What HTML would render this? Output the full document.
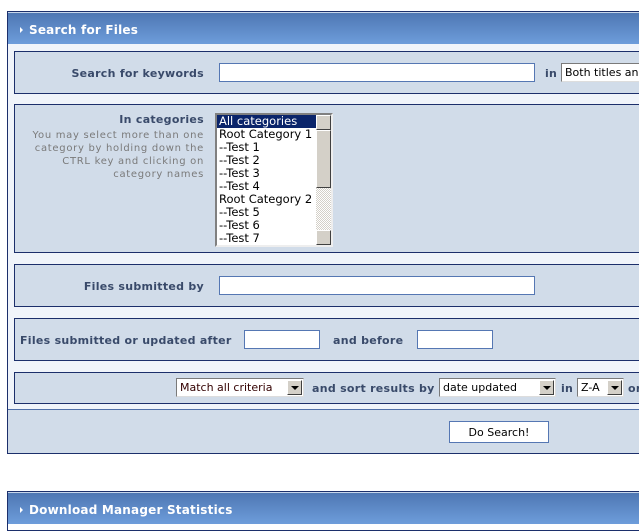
<!DOCTYPE html>
<html><head><style>
*{margin:0;padding:0;box-sizing:border-box}
body{width:639px;height:524px;overflow:hidden;background:#fff;font-family:"DejaVu Sans",Verdana,sans-serif;position:relative}
.a{position:absolute}
.box{position:absolute;left:7px;width:640px;border:1px solid #1c2f6b;border-right:none;background:#f0f4fa}
.hd{position:absolute;left:8px;width:640px;height:32px;background:linear-gradient(#4e77b3,#6d9ddb);color:#fff;font-weight:bold;font-size:12px;letter-spacing:0.2px;line-height:34px;padding-left:21px;border-top:1px solid #c8d6ea}
.hd:before{content:"";position:absolute;left:12px;top:14px;border-left:3px solid #fff;border-top:3px solid transparent;border-bottom:3px solid transparent}
.row{position:absolute;left:14px;width:640px;background:#d1dce9;border:1px solid #1c2f6b;border-right:none}
.lb{position:absolute;font-weight:bold;font-size:11px;letter-spacing:0.28px;color:#394a6a;white-space:nowrap}
.in{position:absolute;background:#fff;border:1px solid #5577b3;height:19px}
.sel{position:absolute;background:#fff;border:1px solid #7a7a7a;border-right-color:#ddd;border-bottom-color:#ddd;height:19px;font-size:11px;line-height:17px;padding-left:3px;color:#000;overflow:hidden;white-space:nowrap}
.sel i{position:absolute;right:1px;top:1px;width:15px;height:15px;background:#d4d0c8;border:1px solid;border-color:#fff #404040 #404040 #fff}
.sel i:after{content:"";position:absolute;left:3px;top:5px;border-top:4px solid #000;border-left:4px solid transparent;border-right:4px solid transparent}
</style></head><body>
<div class="box" style="top:11px;height:443px"></div>
<div class="hd" style="top:12px">Search for Files</div>

<div class="row" style="top:51px;height:43px"></div>
<div class="lb" style="right:435px;top:67px">Search for keywords</div>
<div class="in" style="left:219px;top:63px;width:316px"></div>
<div class="lb" style="left:545px;top:67px">in</div>
<div class="sel" style="left:561px;top:63px;width:90px">Both titles and</div>

<div class="row" style="top:104px;height:149px"></div>
<div class="lb" style="right:435px;top:113px">In categories</div>
<div class="a" style="right:435px;top:129px;width:178px;text-align:right;font-size:10px;letter-spacing:0.7px;line-height:13px;color:#7a7a7a">You may select more than one category by holding down the CTRL key and clicking on category names</div>
<div class="a" style="left:215px;top:113px;width:118px;height:134px;background:#fff;border:2px solid;border-color:#808080 #eee #eee #808080;font-size:11.5px;line-height:13px;overflow:hidden;white-space:nowrap">
<div style="background:#0a246a;color:#fff;width:99px;padding-left:2px">All categories</div>
<div style="padding-left:2px">Root Category 1<br>--Test 1<br>--Test 2<br>--Test 3<br>--Test 4<br>Root Category 2<br>--Test 5<br>--Test 6<br>--Test 7</div>
<div class="a" style="right:0;top:0;width:15px;height:130px;background:repeating-conic-gradient(#d4d0c8 0 25%,#fff 0 50%) 0 0/2px 2px">
<div class="a" style="top:0;width:15px;height:15px;background:#d4d0c8;border:1px solid;border-color:#fff #404040 #404040 #fff"></div>
<div class="a" style="top:15px;width:15px;height:58px;background:#d4d0c8;border:1px solid;border-color:#fff #404040 #404040 #fff"></div>
<div class="a" style="top:115px;width:15px;height:15px;background:#d4d0c8;border:1px solid;border-color:#fff #404040 #404040 #fff"></div>
</div></div>

<div class="row" style="top:264px;height:43px"></div>
<div class="lb" style="right:435px;top:280px">Files submitted by</div>
<div class="in" style="left:219px;top:276px;width:316px"></div>

<div class="row" style="top:318px;height:43px"></div>
<div class="lb" style="left:20px;top:334px">Files submitted or updated after</div>
<div class="in" style="left:244px;top:330px;width:76px"></div>
<div class="lb" style="left:333px;top:334px">and before</div>
<div class="in" style="left:417px;top:330px;width:76px"></div>

<div class="row" style="top:372px;height:32px"></div>
<div class="sel" style="left:176px;top:378px;width:128px;color:#300">Match all criteria<i></i></div>
<div class="lb" style="left:312px;top:382px">and sort results by</div>
<div class="sel" style="left:439px;top:378px;width:117px">date updated<i></i></div>
<div class="lb" style="left:561px;top:382px">in</div>
<div class="sel" style="left:577px;top:378px;width:47px">Z-A<i></i></div>
<div class="lb" style="left:628px;top:382px">or</div>

<div class="a" style="left:8px;top:409px;width:640px;height:45px;background:#d1dce9;border-top:1px solid #4f6fa8;border-bottom:1px solid #1c2f6b"></div>
<div class="a" style="left:449px;top:421px;width:100px;height:22px;background:#fff;border:1px solid #5577b3;font-size:11px;line-height:21px;text-align:center">Do Search!</div>

<div class="a" style="left:7px;top:491px;width:640px;height:40px;border:1px solid #1c2f6b;border-right:none"></div>
<div class="hd" style="top:492px">Download Manager Statistics</div>
</body></html>
